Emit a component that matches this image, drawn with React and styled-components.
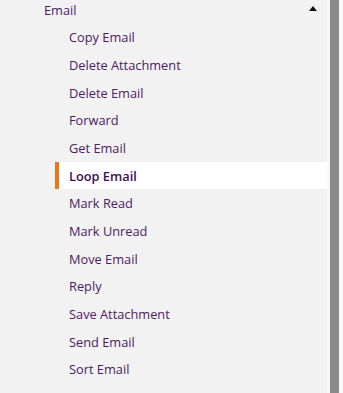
import React from 'react'
import styled, { createGlobalStyle } from 'styled-components'

const GlobalStyle = createGlobalStyle`
  html, body {
    margin: 0;
    padding: 0;
    background: #f9f9f9;
    overflow: hidden;
  }
  body {
    font-family: 'Open Sans', 'Noto Sans', sans-serif;
  }
`

const items = [
  'Copy Email',
  'Delete Attachment',
  'Delete Email',
  'Forward',
  'Get Email',
  'Loop Email',
  'Mark Read',
  'Mark Unread',
  'Move Email',
  'Reply',
  'Save Attachment',
  'Send Email',
  'Sort Email',
]

const Frame = styled.div`
  display: flex;
  height: 393px;
  width: 343px;
`

const Sidebar = styled.nav`
  width: 327px;
  background: #f2f2f2;
  display: flex;
  flex-direction: column;
  padding-bottom: 10px;
`

const Gap = styled.div`
  width: 3px;
  background: #f9f9f9;
`

const Scrollbar = styled.div`
  width: 9px;
  background: #8b8b8b;
`

const GroupHeader = styled.div`
  height: 21px;
  display: flex;
  align-items: center;
  justify-content: space-between;
  padding: 0 10px 0 44px;
  color: #4d1a63;
  font-size: 12.8px;
`

const Caret = styled.span`
  width: 0;
  height: 0;
  border-left: 4.5px solid transparent;
  border-right: 4.5px solid transparent;
  border-bottom: 5px solid #111;
  margin-bottom: 2px;
`

const List = styled.ul`
  list-style: none;
  margin: 4px 0 0;
  padding: 0;
`

const Item = styled.li`
  height: 27.67px;
  display: flex;
  align-items: center;
  margin-left: 55px;
  padding-left: ${(p) => (p.active ? '10px' : '14px')};
  border-left: ${(p) => (p.active ? '4px solid #ec7617' : 'none')};
  background: ${(p) => (p.active ? '#ffffff' : 'transparent')};
  color: ${(p) => (p.active ? '#3f0d55' : '#4d1a63')};
  font-weight: ${(p) => (p.active ? 600 : 400)};
  font-size: 12.8px;
`

export default function App() {
  return (
    <Frame>
      <GlobalStyle />
      <Sidebar>
        <GroupHeader>
          <span>Email</span>
          <Caret />
        </GroupHeader>
        <List>
          {items.map((label) => (
            <Item key={label} active={label === 'Loop Email'}>
              {label}
            </Item>
          ))}
        </List>
      </Sidebar>
      <Gap />
      <Scrollbar />
    </Frame>
  )
}
